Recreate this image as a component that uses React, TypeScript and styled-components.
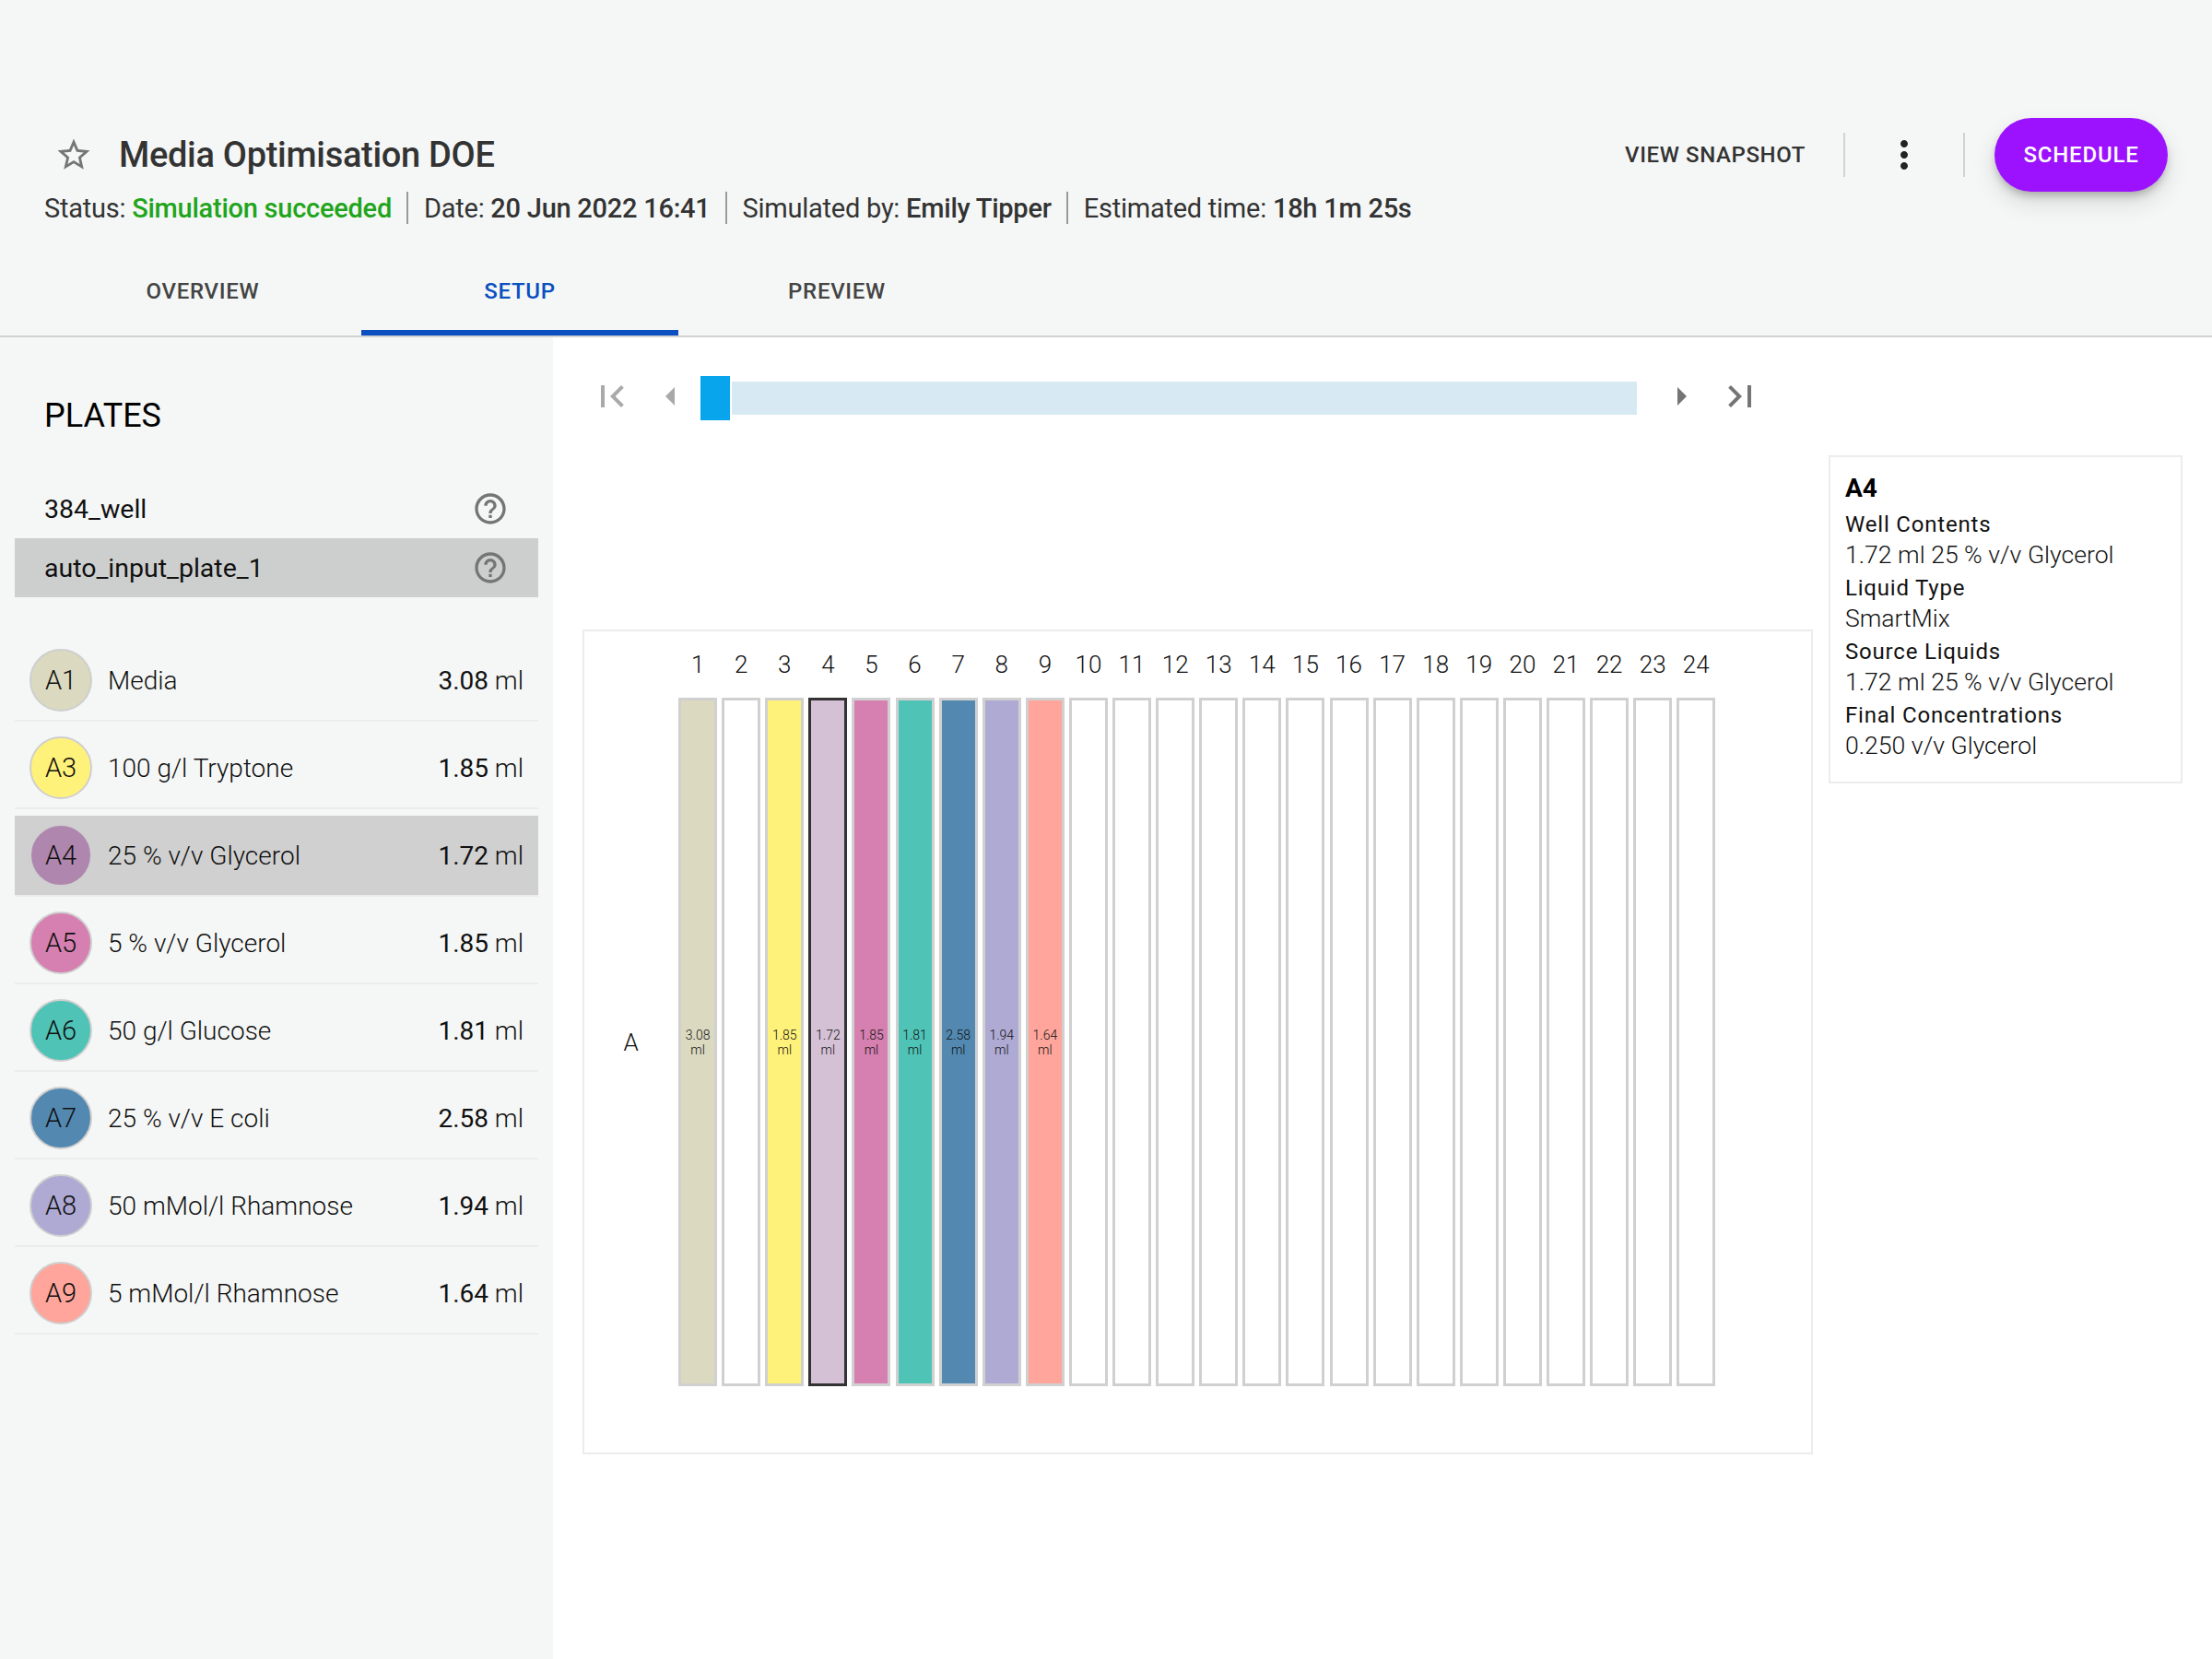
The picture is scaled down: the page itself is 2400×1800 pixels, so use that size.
import React from 'react'
import styled, { createGlobalStyle } from 'styled-components'

const GlobalStyle = createGlobalStyle`
  html, body {
    margin: 0;
    padding: 0;
    background: #f5f7f6;
  }
  body {
    font-family: Roboto, "Liberation Sans", sans-serif;
    color: #000;
  }
`

const Page = styled.div`
  width: 2400px;
  height: 1800px;
  display: flex;
  flex-direction: column;
  background: #f5f7f6;
  overflow: hidden;
`

const Header = styled.header`
  padding: 128px 48px 0;
  border-bottom: 2px solid #d2d2d2;
`

const TitleRow = styled.div`
  display: flex;
  align-items: center;
  justify-content: space-between;
  height: 80px;
`

const TitleGroup = styled.div`
  display: flex;
  align-items: center;
  gap: 28px;
  padding-left: 11px;
`

const Title = styled.h1`
  margin: 0;
  font-size: 38px;
  font-weight: 500;
  letter-spacing: -0.3px;
  color: #333;
`

const Actions = styled.div`
  display: flex;
  align-items: center;
`

const ViewSnapshot = styled.span`
  font-size: 24px;
  font-weight: 500;
  letter-spacing: 0.6px;
  color: #333;
  margin-right: 41px;
`

const VDivider = styled.span`
  width: 2px;
  height: 48px;
  background: #d2d2d2;
`

const MoreBox = styled.span`
  display: flex;
  justify-content: center;
  width: 128px;
  color: #222;
`

const ScheduleButton = styled.button`
  width: 188px;
  height: 80px;
  margin-left: 32px;
  border: 0;
  border-radius: 40px;
  background: #9c12ff;
  color: #fff;
  font-family: inherit;
  font-size: 24px;
  font-weight: 500;
  letter-spacing: 0.8px;
  box-shadow: 0 6px 10px -2px rgba(0, 0, 0, 0.25), 0 12px 24px 2px rgba(0, 0, 0, 0.1);
`

const StatusRow = styled.div`
  display: flex;
  align-items: center;
  height: 35px;
  font-size: 29px;
  letter-spacing: -0.25px;
  color: #333;
`

const StatusItem = styled.span`
  box-sizing: border-box;
  height: 35px;
  padding: 2px 16.5px 0;
  border-left: 2px solid #9a9a9a;
  line-height: 33px;
  white-space: nowrap;

  &:first-child {
    padding-left: 0;
    border-left: 0;
  }

  b {
    font-weight: 500;
  }
`

const Success = styled.b`
  color: #1fa51b;
`

const Tabs = styled.nav`
  display: flex;
  margin-top: 23px;
`

const Tab = styled.div<{ $active?: boolean }>`
  width: 344px;
  height: 98px;
  box-sizing: border-box;
  display: flex;
  align-items: center;
  justify-content: center;
  padding-top: ${(p) => (p.$active ? '7px' : '1px')};
  font-size: 24px;
  font-weight: 500;
  letter-spacing: 0.7px;
  color: ${(p) => (p.$active ? '#0b4fc0' : '#444')};
  border-bottom: ${(p) => (p.$active ? '6px solid #0b4fc0' : '0')};
`

const Main = styled.main`
  flex: 1;
  display: flex;
  min-height: 0;
`

const Sidebar = styled.aside`
  width: 600px;
  box-sizing: border-box;
  padding: 63px 16px 0;
`

const SidebarTitle = styled.h2`
  margin: 0 0 47px 32px;
  font-size: 36px;
  line-height: 44px;
  font-weight: 400;
`

const PlateRow = styled.div<{ $active?: boolean }>`
  height: 64px;
  display: flex;
  align-items: center;
  justify-content: space-between;
  padding: 0 32px;
  font-size: 28.5px;
  background: ${(p) => (p.$active ? '#cdcfce' : 'transparent')};
  color: #111;
`

const HelpIcon = styled.svg`
  width: 40px;
  height: 40px;
  fill: #757575;
`

const WellList = styled.div`
  margin-top: 40px;
`

const WellRow = styled.div`
  padding-top: 7px;
  border-bottom: 2px solid #ececec;
`

const WellRowInner = styled.div<{ $active?: boolean }>`
  height: 86px;
  display: flex;
  align-items: center;
  padding: 0 16px;
  background: ${(p) => (p.$active ? '#d0d0d0' : 'transparent')};
`

const Swatch = styled.span<{ $color: string }>`
  width: 68px;
  height: 68px;
  box-sizing: border-box;
  flex: none;
  border-radius: 50%;
  border: 2px solid #cfcfcf;
  background: ${(p) => p.$color};
  display: flex;
  align-items: center;
  justify-content: center;
  font-size: 29px;
  font-weight: 300;
  color: #111;
`

const WellName = styled.span`
  margin-left: 17px;
  flex: 1;
  font-size: 28px;
  font-weight: 300;
  color: #111;
`

const WellVolume = styled.span`
  font-size: 28px;
  font-weight: 300;
  color: #111;

  b {
    font-weight: 400;
  }
`

const Content = styled.section`
  flex: 1;
  background: #fff;
`

const Player = styled.div`
  display: flex;
  align-items: center;
  gap: 16px;
  margin-top: 42px;
  padding-left: 40px;
  height: 48px;
`

const PlayerIcon = styled.svg<{ $disabled?: boolean }>`
  width: 48px;
  height: 48px;
  flex: none;
  margin-top: -4px;
  fill: ${(p) => (p.$disabled ? '#a9a9a9' : '#757575')};
`

const Slider = styled.div`
  width: 1016px;
  display: flex;
  align-items: center;
  gap: 2px;
  margin: 0 8px 0 -8px;
`

const Thumb = styled.span`
  width: 32px;
  height: 48px;
  flex: none;
  background: #08a4ec;
`

const Track = styled.span`
  flex: 1;
  height: 36px;
  background: #d7eaf3;
`

const Workspace = styled.div`
  display: flex;
  align-items: flex-start;
  gap: 17px;
  margin-top: 38px;
  padding-left: 32px;
`

const PlateCard = styled.div`
  width: 1335px;
  height: 895px;
  margin-top: 189px;
  box-sizing: border-box;
  border: 2px solid #ececec;
  padding-top: 18px;
  display: grid;
  grid-template-columns: 97px repeat(24, 42px);
  grid-template-rows: 36px 747px;
  column-gap: 5.1px;
  row-gap: 18px;
  align-content: start;
`

const ColumnLabel = styled.span`
  display: flex;
  align-items: center;
  justify-content: center;
  font-size: 26px;
  font-weight: 300;
  color: #111;
`

const RowLabel = styled.span`
  display: flex;
  align-items: center;
  justify-content: center;
  padding-left: 4px;
  font-size: 26px;
  font-weight: 300;
  color: #111;
`

const Well = styled.div<{ $color?: string; $selected?: boolean }>`
  box-sizing: border-box;
  border: 3px solid ${(p) => (p.$selected ? '#333' : '#d0d0d0')};
  background: ${(p) => p.$color ?? '#fff'};
  display: flex;
  align-items: center;
  justify-content: center;
  text-align: center;
  font-size: 14px;
  line-height: 16px;
  font-weight: 300;
  color: #111;
`

const InfoBox = styled.aside`
  width: 384px;
  height: 356px;
  box-sizing: border-box;
  border: 2px solid #ececec;
  padding: 16px 16px 0;
`

const InfoTitle = styled.div`
  font-size: 28px;
  font-weight: 700;
  line-height: 36px;
  margin-bottom: 5px;
`

const InfoLabel = styled.div`
  font-size: 24px;
  font-weight: 400;
  line-height: 32px;
  letter-spacing: 0.8px;
  color: #111;
  margin-top: 3px;
`

const InfoValue = styled.div`
  font-size: 26.6px;
  font-weight: 300;
  line-height: 34px;
  color: #111;
`

const ICONS = {
  star: 'M22 9.24l-7.19-.62L12 2 9.19 8.63 2 9.24l5.46 4.73L5.82 21 12 17.27 18.18 21l-1.63-7.03L22 9.24zM12 15.4l-3.76 2.27 1-4.28-3.32-2.88 4.38-.38L12 6.1l1.71 4.04 4.38.38-3.32 2.88 1 4.28L12 15.4z',
  more: 'M12 8c1.1 0 2-.9 2-2s-.9-2-2-2-2 .9-2 2 .9 2 2 2zm0 2c-1.1 0-2 .9-2 2s.9 2 2 2 2-.9 2-2-.9-2-2-2zm0 6c-1.1 0-2 .9-2 2s.9 2 2 2 2-.9 2-2-.9-2-2-2z',
  help: 'M11 18h2v-2h-2v2zm1-16C6.48 2 2 6.48 2 12s4.48 10 10 10 10-4.48 10-10S17.52 2 12 2zm0 18c-4.41 0-8-3.59-8-8s3.59-8 8-8 8 3.59 8 8-3.59 8-8 8zm0-14c-2.21 0-4 1.79-4 4h2c0-1.1.9-2 2-2s2 .9 2 2c0 2-3 1.75-3 5h2c0-2.25 3-2.5 3-5 0-2.21-1.79-4-4-4z',
  first: 'M18.41 16.59L13.82 12l4.59-4.59L17 6l-6 6 6 6zM6 6h2v12H6z',
  last: 'M5.59 7.41L10.18 12l-4.59 4.59L7 18l6-6-6-6zM16 6h2v12h-2z',
  prev: 'M14 7l-5 5 5 5V7z',
  next: 'M10 17l5-5-5-5v10z',
}

const wells = [
  { id: 'A1', name: 'Media', volume: '3.08', color: '#dbd9c0', column: 1 },
  { id: 'A3', name: '100 g/l Tryptone', volume: '1.85', color: '#fff27a', column: 3 },
  { id: 'A4', name: '25 % v/v Glycerol', volume: '1.72', color: '#af86ae', column: 4 },
  { id: 'A5', name: '5 % v/v Glycerol', volume: '1.85', color: '#d580b0', column: 5 },
  { id: 'A6', name: '50 g/l Glucose', volume: '1.81', color: '#4fc3b6', column: 6 },
  { id: 'A7', name: '25 % v/v E coli', volume: '2.58', color: '#5389b1', column: 7 },
  { id: 'A8', name: '50 mMol/l Rhamnose', volume: '1.94', color: '#aeaad4', column: 8 },
  { id: 'A9', name: '5 mMol/l Rhamnose', volume: '1.64', color: '#ffa59b', column: 9 },
]

const SELECTED = 'A4'
const SELECTED_FILL = '#d5c1d6'
const columns = Array.from({ length: 24 }, (_, i) => i + 1)

const info = [
  ['Well Contents', '1.72 ml 25 % v/v Glycerol'],
  ['Liquid Type', 'SmartMix'],
  ['Source Liquids', '1.72 ml 25 % v/v Glycerol'],
  ['Final Concentrations', '0.250 v/v Glycerol'],
]

export default function App() {
  return (
    <Page>
      <GlobalStyle />
      <Header>
        <TitleRow>
          <TitleGroup>
            <svg width="42" height="42" viewBox="0 0 24 24" fill="#757575">
              <path d={ICONS.star} />
            </svg>
            <Title>Media Optimisation DOE</Title>
          </TitleGroup>
          <Actions>
            <ViewSnapshot>VIEW SNAPSHOT</ViewSnapshot>
            <VDivider />
            <MoreBox>
              <svg width="48" height="48" viewBox="0 0 24 24" fill="currentColor">
                <path d={ICONS.more} />
              </svg>
            </MoreBox>
            <VDivider />
            <ScheduleButton>SCHEDULE</ScheduleButton>
          </Actions>
        </TitleRow>
        <StatusRow>
          <StatusItem>
            Status: <Success>Simulation succeeded</Success>
          </StatusItem>
          <StatusItem>
            Date: <b>20 Jun 2022 16:41</b>
          </StatusItem>
          <StatusItem>
            Simulated by: <b>Emily Tipper</b>
          </StatusItem>
          <StatusItem>
            Estimated time: <b>18h 1m 25s</b>
          </StatusItem>
        </StatusRow>
        <Tabs>
          <Tab>OVERVIEW</Tab>
          <Tab $active>SETUP</Tab>
          <Tab>PREVIEW</Tab>
        </Tabs>
      </Header>
      <Main>
        <Sidebar>
          <SidebarTitle>PLATES</SidebarTitle>
          <PlateRow>
            384_well
            <HelpIcon viewBox="0 0 24 24">
              <path d={ICONS.help} />
            </HelpIcon>
          </PlateRow>
          <PlateRow $active>
            auto_input_plate_1
            <HelpIcon viewBox="0 0 24 24">
              <path d={ICONS.help} />
            </HelpIcon>
          </PlateRow>
          <WellList>
            {wells.map((well) => (
              <WellRow key={well.id}>
                <WellRowInner $active={well.id === SELECTED}>
                  <Swatch $color={well.color}>{well.id}</Swatch>
                  <WellName>{well.name}</WellName>
                  <WellVolume>
                    <b>{well.volume}</b> ml
                  </WellVolume>
                </WellRowInner>
              </WellRow>
            ))}
          </WellList>
        </Sidebar>
        <Content>
          <Player>
            <PlayerIcon $disabled viewBox="0 0 24 24">
              <path d={ICONS.first} />
            </PlayerIcon>
            <PlayerIcon $disabled viewBox="0 0 24 24">
              <path d={ICONS.prev} />
            </PlayerIcon>
            <Slider>
              <Thumb />
              <Track />
            </Slider>
            <PlayerIcon viewBox="0 0 24 24">
              <path d={ICONS.next} />
            </PlayerIcon>
            <PlayerIcon viewBox="0 0 24 24">
              <path d={ICONS.last} />
            </PlayerIcon>
          </Player>
          <Workspace>
            <PlateCard>
              <span />
              {columns.map((column) => (
                <ColumnLabel key={column}>{column}</ColumnLabel>
              ))}
              <RowLabel>A</RowLabel>
              {columns.map((column) => {
                const well = wells.find((w) => w.column === column)
                const selected = well?.id === SELECTED
                return (
                  <Well key={column} $color={selected ? SELECTED_FILL : well?.color} $selected={selected}>
                    {well && `${well.volume} ml`}
                  </Well>
                )
              })}
            </PlateCard>
            <InfoBox>
              <InfoTitle>{SELECTED}</InfoTitle>
              {info.map(([label, value]) => (
                <React.Fragment key={label}>
                  <InfoLabel>{label}</InfoLabel>
                  <InfoValue>{value}</InfoValue>
                </React.Fragment>
              ))}
            </InfoBox>
          </Workspace>
        </Content>
      </Main>
    </Page>
  )
}
